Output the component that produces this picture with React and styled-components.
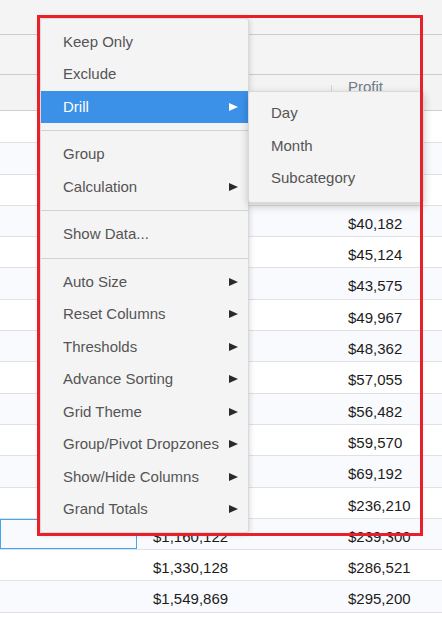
import React from "react";
import styled, { createGlobalStyle } from "styled-components";

const GlobalStyle = createGlobalStyle`
  html, body {
    margin: 0;
    padding: 0;
    background: #fff;
    font-family: "Liberation Sans", Arial, sans-serif;
  }
  * { box-sizing: border-box; }
`;

const Page = styled.div`
  position: relative;
  width: 442px;
  height: 617px;
  overflow: hidden;
  background: #fff;
`;

const Toolbar = styled.div`
  height: 35px;
  background: #f4f4f4;
  border-bottom: 1px solid #c9cbd0;
`;

const DropZone = styled.div`
  height: 40px;
  background: #f4f4f4;
  border-bottom: 1px solid #c9cbd0;
`;

const Header = styled.div`
  display: grid;
  grid-template-columns: 137px 194px 1fr;
  height: 36px;
  background: #f3f3f3;
  border-bottom: 1px solid #cfcfcf;
`;

const HeadCell = styled.div`
  position: relative;
  padding: 3px 0 0 ${(p) => p.$pad || 16}px;
  font-size: 15px;
  line-height: 17px;
  color: #6f7b88;

  &::before {
    content: "";
    display: ${(p) => (p.$divider ? "block" : "none")};
    position: absolute;
    left: 0;
    top: 10px;
    width: 1px;
    height: 16px;
    background: #d2d2d2;
  }
`;

const Body = styled.div`
  padding-top: 1px;
`;

const Row = styled.div`
  display: grid;
  grid-template-columns: 137px 194px 1fr;
  height: 31.3px;
  background: ${(p) => (p.$alt ? "#f9fafd" : "#fff")};
  border-bottom: 1px solid #e1e1e1;
`;

const Cell = styled.div`
  padding: 9px 0 0 ${(p) => p.$pad || 16}px;
  font-size: 15px;
  line-height: 17px;
  color: #1c1c1c;
  white-space: nowrap;
  box-shadow: ${(p) => (p.$selected ? "inset 0 0 0 1px #42a5f5" : "none")};
`;

const Menu = styled.div`
  position: absolute;
  left: ${(p) => p.$left}px;
  top: ${(p) => p.$top}px;
  width: ${(p) => p.$width}px;
  padding: ${(p) => p.$padding};
  background: #f4f4f4;
  border: 1px solid #d9d9d9;
  border-radius: 3px;
  box-shadow: ${(p) => p.$shadow};
  z-index: ${(p) => p.$z};
`;

const Item = styled.div`
  display: flex;
  align-items: center;
  justify-content: space-between;
  height: 32.5px;
  padding: 0 10px 1px 22px;
  font-size: 15px;
  color: ${(p) => (p.$active ? "#fff" : "#555")};
  background: ${(p) => (p.$active ? "#3b90e7" : "transparent")};
  white-space: nowrap;
`;

const Arrow = styled.span`
  width: 0;
  height: 0;
  margin-top: 1px;
  border-left: 9px solid ${(p) => (p.$active ? "#fff" : "#2a2a2a")};
  border-top: 4.5px solid transparent;
  border-bottom: 4.5px solid transparent;
`;

const Separator = styled.div`
  height: 1px;
  margin: 7px 0;
  background: #d3d3d3;
`;

const Highlight = styled.div`
  position: absolute;
  left: 37px;
  top: 15px;
  width: 386px;
  height: 521px;
  border: 3px solid #e8202a;
  z-index: 10;
  pointer-events: none;
`;

// values hidden under the menus are left blank
const rows = [
  ["", ""],
  ["", ""],
  ["", ""],
  ["", "$40,182"],
  ["", "$45,124"],
  ["", "$43,575"],
  ["", "$49,967"],
  ["", "$48,362"],
  ["", "$57,055"],
  ["", "$56,482"],
  ["", "$59,570"],
  ["", "$69,192"],
  ["", "$236,210"],
  ["$1,160,122", "$239,300"],
  ["$1,330,128", "$286,521"],
  ["$1,549,869", "$295,200"],
];

const menuItems = [
  { label: "Keep Only" },
  { label: "Exclude" },
  { label: "Drill", sub: true, active: true },
  { sep: true },
  { label: "Group" },
  { label: "Calculation", sub: true },
  { sep: true },
  { label: "Show Data..." },
  { sep: true },
  { label: "Auto Size", sub: true },
  { label: "Reset Columns", sub: true },
  { label: "Thresholds", sub: true },
  { label: "Advance Sorting", sub: true },
  { label: "Grid Theme", sub: true },
  { label: "Group/Pivot Dropzones", sub: true },
  { label: "Show/Hide Columns", sub: true },
  { label: "Grand Totals", sub: true },
];

const drillItems = ["Day", "Month", "Subcategory"];

export default function App() {
  return (
    <Page>
      <GlobalStyle />
      <Toolbar />
      <DropZone />
      <Header>
        <HeadCell />
        <HeadCell />
        <HeadCell $divider $pad={17}>
          Profit
        </HeadCell>
      </Header>
      <Body>
        {rows.map((r, i) => (
          <Row key={i} $alt={i % 2 === 1}>
            <Cell $selected={i === 13} />
            <Cell>{r[0]}</Cell>
            <Cell $pad={17}>{r[1]}</Cell>
          </Row>
        ))}
      </Body>

      <Menu
        $left={40}
        $top={18}
        $width={209}
        $padding="6.5px 0 6px"
        $shadow="0 1px 6px rgba(0,0,0,0.18)"
        $z={4}
      >
        {menuItems.map((m, i) =>
          m.sep ? (
            <Separator key={i} />
          ) : (
            <Item key={i} $active={m.active}>
              <span>{m.label}</span>
              {m.sub && <Arrow $active={m.active} />}
            </Item>
          )
        )}
      </Menu>

      <Menu
        $left={248}
        $top={91}
        $width={176}
        $padding="5px 0 7px"
        $shadow="0 3px 9px rgba(0,0,0,0.22)"
        $z={5}
      >
        {drillItems.map((d) => (
          <Item key={d}>
            <span>{d}</span>
          </Item>
        ))}
      </Menu>

      <Highlight />
    </Page>
  );
}
